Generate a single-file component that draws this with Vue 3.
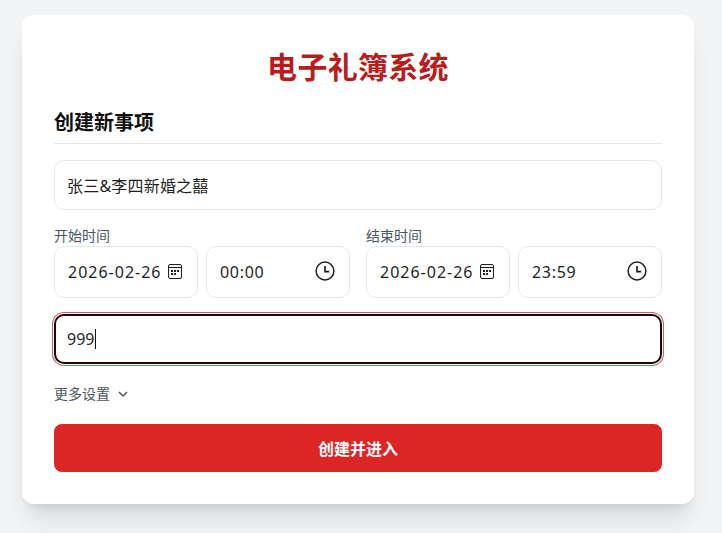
<template>
  <div class="page">
    <div class="card">
      <h1 class="title">电子礼簿系统</h1>
      <h2 class="section-title">创建新事项</h2>
      <form class="form" @submit.prevent>
        <input class="field" type="text" value="张三&李四新婚之囍" />

        <div class="time-row">
          <div v-for="group in timeGroups" :key="group.label" class="time-group">
            <label class="time-label">{{ group.label }}</label>
            <div class="time-inputs">
              <div class="picker">
                <input class="picker-input date-input" type="text" :value="group.date" />
                <svg class="icon-calendar" viewBox="0 0 15 15" fill="none" stroke="#1f1f1f">
                  <rect x="0.5" y="0.5" width="13" height="14" rx="1.5" />
                  <path d="M0.5 3.5h13" />
                  <path fill="#1f1f1f" stroke="none" d="M3 6h2v2H3zM6 6h2v2H6zM9 6h2v2H9zM3 9h2v2H3zM6 9h2v2H6z" />
                </svg>
              </div>
              <div class="picker">
                <input class="picker-input time-input" type="text" :value="group.time" />
                <svg class="icon-clock" viewBox="0 0 20 20" fill="none" stroke="#1f1f1f" stroke-width="1.5">
                  <circle cx="10" cy="10" r="8.9" />
                  <path d="M10 5v5.6h4.2" stroke-width="1.7" />
                </svg>
              </div>
            </div>
          </div>
        </div>

        <div class="active-wrap">
          <input class="field field-active" type="text" value="999" />
          <span class="caret"></span>
        </div>

        <div class="more">
          <span>更多设置</span>
          <svg class="chevron" viewBox="0 0 12 12" fill="none" stroke="#4b5563" stroke-width="1.5">
            <path d="M2 4l4 4 4-4" />
          </svg>
        </div>

        <button class="submit" type="submit">创建并进入</button>
      </form>
    </div>
  </div>
</template>

<script setup>
const timeGroups = [
  { label: '开始时间', date: '2026-02-26', time: '00:00' },
  { label: '结束时间', date: '2026-02-26', time: '23:59' },
]
</script>

<style>
html,
body {
  margin: 0;
  background: #f3f4f6;
}
</style>

<style scoped>
.page {
  box-sizing: border-box;
  height: 533px;
  padding: 15px 0 0 22px;
  overflow: hidden;
  font-family: "Noto Sans", "Noto Sans CJK SC", sans-serif;
}

.card {
  box-sizing: border-box;
  width: 672px;
  height: 489px;
  padding: 32px;
  background: #fff;
  border-radius: 12px;
  box-shadow: 0 20px 25px -5px rgba(0, 0, 0, 0.1), 0 8px 10px -6px rgba(0, 0, 0, 0.1);
}

.title {
  margin: 0 0 22px;
  padding-top: 2px;
  font-size: 30px;
  line-height: 36px;
  font-weight: 700;
  letter-spacing: 0.3px;
  text-align: center;
  color: #b91c1c;
}

.section-title {
  margin: 0 0 16px;
  padding: 2px 0 6px;
  border-bottom: 1px solid #e5e7eb;
  font-size: 20px;
  line-height: 28px;
  font-weight: 700;
  color: #111;
}

.form {
  display: flex;
  flex-direction: column;
}

.field {
  box-sizing: border-box;
  width: 100%;
  height: 50px;
  padding: 0 12px;
  background: #fff;
  border: 1px solid #e5e7eb;
  border-radius: 10px;
  font: inherit;
  font-size: 16px;
  letter-spacing: 0.2px;
  color: #1f1f1f;
}

.active-wrap {
  position: relative;
  margin-top: 16px;
}

.field-active {
  display: block;
  letter-spacing: 0;
  border-color: transparent;
  outline: 2px solid #1a0a0a;
  outline-offset: -2px;
  box-shadow: 0 0 0 1px #fdf2f2, 0 0 0 2px #c2646c;
}

.caret {
  position: absolute;
  left: 41px;
  top: 15px;
  width: 1px;
  height: 20px;
  background: #111;
}

.time-row {
  display: grid;
  grid-template-columns: repeat(2, minmax(0, 1fr));
  gap: 16px;
  margin-top: 16px;
}

.time-label {
  display: block;
  font-size: 14px;
  line-height: 20px;
  color: #4b5563;
}

.time-inputs {
  display: grid;
  grid-template-columns: repeat(2, minmax(0, 1fr));
  gap: 8px;
}

.picker {
  display: flex;
  align-items: center;
  box-sizing: border-box;
  height: 52px;
  padding: 0 14px 0 13px;
  border: 1px solid #e5e7eb;
  border-radius: 10px;
}

.picker-input {
  flex: 1;
  min-width: 0;
  padding: 0;
  border: 0;
  outline: 0;
  font: inherit;
  font-size: 16px;
  color: #1f1f1f;
}

.date-input {
  letter-spacing: 1px;
}

.time-input {
  letter-spacing: 0.7px;
}

.icon-calendar {
  flex: none;
  width: 15px;
  height: 15px;
  margin-top: -1px;
}

.icon-clock {
  flex: none;
  width: 20px;
  height: 20px;
  margin-bottom: 2px;
}

.more {
  display: flex;
  align-items: center;
  gap: 7px;
  margin-top: 20px;
  font-size: 14px;
  line-height: 20px;
  color: #4b5563;
}

.chevron {
  width: 12px;
  height: 12px;
}

.submit {
  height: 48px;
  margin-top: 20px;
  padding-bottom: 2px;
  background: #dc2626;
  border: 0;
  border-radius: 8px;
  font: inherit;
  font-size: 16px;
  font-weight: 700;
  color: #fff;
}
</style>
